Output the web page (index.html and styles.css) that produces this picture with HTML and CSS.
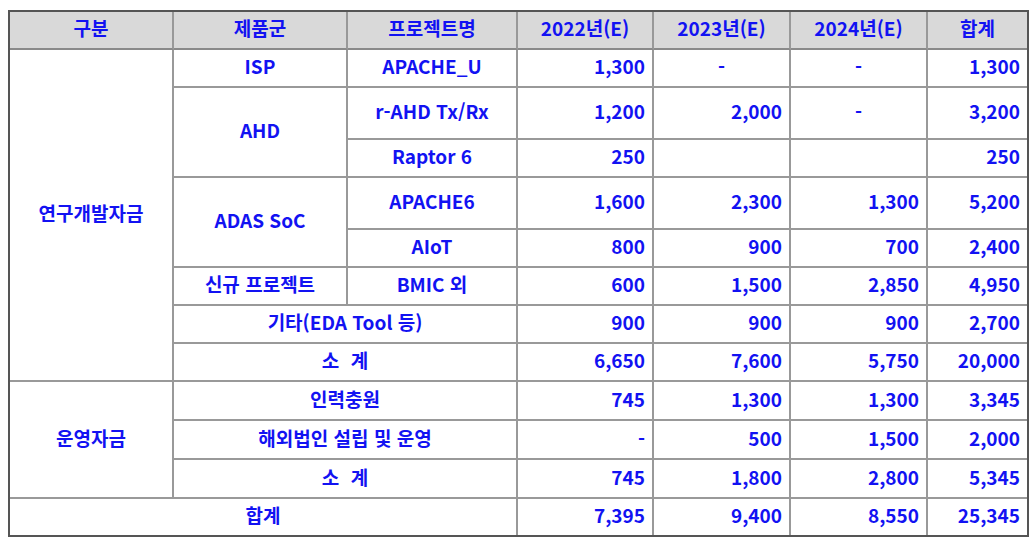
FILE: index.html
```html
<!DOCTYPE html>
<html lang="ko">
<head>
<meta charset="utf-8">
<link rel="stylesheet" href="styles.css">
</head>
<body>
<table class="budget">
  <colgroup>
    <col class="c1"><col class="c2"><col class="c3"><col class="c4"><col class="c5"><col class="c6"><col class="c7">
  </colgroup>
  <thead>
    <tr class="r-head">
      <th>구분</th><th>제품군</th><th>프로젝트명</th><th>2022년(E)</th><th>2023년(E)</th><th>2024년(E)</th><th>합계</th>
    </tr>
  </thead>
  <tbody>
    <tr class="r38">
      <td class="ctr" rowspan="8">연구개발자금</td>
      <td class="ctr">ISP</td>
      <td class="ctr">APACHE_U</td>
      <td class="num">1,300</td><td class="ctr">-</td><td class="ctr">-</td><td class="num">1,300</td>
    </tr>
    <tr class="r52">
      <td class="ctr" rowspan="2">AHD</td>
      <td class="ctr">r-AHD Tx/Rx</td>
      <td class="num">1,200</td><td class="num">2,000</td><td class="ctr">-</td><td class="num">3,200</td>
    </tr>
    <tr class="r38">
      <td class="ctr">Raptor 6</td>
      <td class="num">250</td><td class="num"></td><td class="num"></td><td class="num">250</td>
    </tr>
    <tr class="r52">
      <td class="ctr" rowspan="2">ADAS SoC</td>
      <td class="ctr">APACHE6</td>
      <td class="num">1,600</td><td class="num">2,300</td><td class="num">1,300</td><td class="num">5,200</td>
    </tr>
    <tr class="r38">
      <td class="ctr">AIoT</td>
      <td class="num">800</td><td class="num">900</td><td class="num">700</td><td class="num">2,400</td>
    </tr>
    <tr class="r38">
      <td class="ctr">신규 프로젝트</td>
      <td class="ctr">BMIC 외</td>
      <td class="num">600</td><td class="num">1,500</td><td class="num">2,850</td><td class="num">4,950</td>
    </tr>
    <tr class="r38">
      <td class="ctr" colspan="2">기타(EDA Tool 등)</td>
      <td class="num">900</td><td class="num">900</td><td class="num">900</td><td class="num">2,700</td>
    </tr>
    <tr class="r38">
      <td class="ctr spaced" colspan="2">소 계</td>
      <td class="num">6,650</td><td class="num">7,600</td><td class="num">5,750</td><td class="num">20,000</td>
    </tr>
    <tr class="r39">
      <td class="ctr" rowspan="3">운영자금</td>
      <td class="ctr" colspan="2">인력충원</td>
      <td class="num">745</td><td class="num">1,300</td><td class="num">1,300</td><td class="num">3,345</td>
    </tr>
    <tr class="r39">
      <td class="ctr" colspan="2">해외법인 설립 및 운영</td>
      <td class="num">-</td><td class="num">500</td><td class="num">1,500</td><td class="num">2,000</td>
    </tr>
    <tr class="r39">
      <td class="ctr spaced" colspan="2">소 계</td>
      <td class="num">745</td><td class="num">1,800</td><td class="num">2,800</td><td class="num">5,345</td>
    </tr>
    <tr class="r-last">
      <td class="ctr" colspan="3">합계</td>
      <td class="num">7,395</td><td class="num">9,400</td><td class="num">8,550</td><td class="num">25,345</td>
    </tr>
  </tbody>
</table>
</body>
</html>
```

FILE: styles.css
```css
html, body {
  margin: 0;
  padding: 0;
  background: #ffffff;
}

body {
  font-family: "Noto Sans CJK KR", "Noto Sans", sans-serif;
  color: #1212f2;
}

.budget {
  margin: 10px 0 0 8px;
  width: 1019px;
  table-layout: fixed;
  border-collapse: separate;
  border-spacing: 0;
  border: 2px solid #555555;
  font-size: 19px;
  font-weight: 700;
  line-height: 1;
}

.c1 { width: 164px; }
.c2 { width: 174px; }
.c3 { width: 170px; }
.c4 { width: 136px; }
.c5 { width: 137px; }
.c6 { width: 137px; }
.c7 { width: 99px; }

.budget th,
.budget td {
  padding: 0 0 5px 0;
  border-right: 2px solid #999999;
  border-bottom: 2px solid #999999;
  vertical-align: middle;
  white-space: nowrap;
}

.budget tr > :last-child {
  border-right: 0;
}

.budget tbody tr:last-child > td {
  border-bottom: 0;
}

.budget th {
  background: #d9d9d9;
  font-weight: 700;
  text-align: center;
  border-bottom: 2px solid #8a8a8a;
}

.r-head { height: 38px; }
.r38 { height: 38px; }
.r39 { height: 39px; }
.r52 { height: 52px; }
.r-last { height: 36px; }

.ctr { text-align: center; }

.num {
  text-align: right;
  padding-right: 7px !important;
}

.spaced { word-spacing: 6px; }
```
